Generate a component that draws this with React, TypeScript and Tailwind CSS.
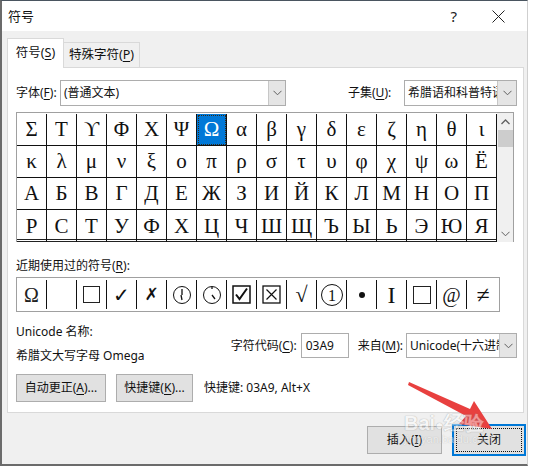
import React from 'react';

const ui = "font-['Noto_Sans','Noto_Sans_CJK_SC',sans-serif]";
const serif = "font-['Liberation_Serif','DejaVu_Serif',serif]";

const U: React.FC<{ c: string }> = ({ c }) => (
  <span className="underline underline-offset-[2px] decoration-1">{c}</span>
);

const Chevron: React.FC = () => (
  <svg width="9" height="6" viewBox="0 0 9 6">
    <path d="M0.5 0.8 L4.5 4.8 L8.5 0.8" fill="none" stroke="#606060" strokeWidth="1" />
  </svg>
);

const grid = [
  'ΣΤϒΦΧΨΩαβγδεζηθι',
  'κλμνξοπρστυφχψωЁ',
  'АБВГДЕЖЗИЙКЛМНОП',
  'РСТУФХЦЧШЩЪЫЬЭЮЯ',
];

const Clock: React.FC<{ hand: string }> = ({ hand }) => (
  <svg width="20" height="20" viewBox="0 0 20 20">
    <circle cx="10" cy="10" r="8.5" fill="none" stroke="#111" strokeWidth="1" />
    <path d={hand} fill="none" stroke="#111" strokeWidth="1.3" />
  </svg>
);

const recent: React.ReactNode[] = [
  <span className={`${serif} text-[20px] font-normal text-[#222]`}>Ω</span>,
  null,
  <span className="block w-[17px] h-[17px] border-[1.5px] border-[#222]" />,
  <span className="font-['DejaVu_Sans'] text-[20px] font-bold">✓</span>,
  <span className="font-['DejaVu_Sans'] text-[17px] font-bold">✗</span>,
  <Clock hand="M10 4 L10 10 M9 10 L10 15" />,
  <Clock hand="M10 2 L10 4 M10 10 L13 14" />,
  <svg width="19" height="19" viewBox="0 0 19 19">
    <rect x="1" y="1" width="17" height="17" fill="none" stroke="#111" strokeWidth="1.5" />
    <path d="M4 9.5 L7.5 14 L15 3.5" fill="none" stroke="#111" strokeWidth="2" />
  </svg>,
  <svg width="19" height="19" viewBox="0 0 19 19">
    <rect x="1" y="1" width="17" height="17" fill="none" stroke="#111" strokeWidth="1.3" />
    <path d="M4.5 4.5 L14.5 14.5 M14.5 4.5 L4.5 14.5" fill="none" stroke="#111" strokeWidth="1.2" />
  </svg>,
  <span className={`${serif} text-[22px]`}>√</span>,
  <svg width="24" height="24" viewBox="0 0 24 24">
    <circle cx="12" cy="12" r="10.5" fill="none" stroke="#111" strokeWidth="1" />
    <text x="12" y="17.5" textAnchor="middle" fontSize="16" fontFamily="Liberation Serif" fill="#111">1</text>
  </svg>,
  <span className="block w-[6px] h-[6px] rounded-full bg-[#111]" />,
  <span className={`${serif} text-[24px]`}>I</span>,
  <span className="block w-[18px] h-[18px] border-[1.5px] border-[#222]" />,
  <span className={`${serif} text-[20px]`}>@</span>,
  <span className={`${serif} text-[24px]`}>≠</span>,
];

export default function App() {
  return (
    <div className={`relative w-[533px] h-[466px] bg-white overflow-hidden text-[12px] text-[#111] ${ui}`}>
      <div className="w-[528px] h-[466px] flex flex-col border-t border-[#4a5560] border-l-2 border-l-[#6b6b6b] border-r border-r-[#cfcfcf] border-b-2 border-b-[#6b6b6b]">
        {/* title bar */}
        <div className="h-[30px] bg-white flex items-center pl-[6px] pr-[22px]">
          <span className="text-[13px] leading-none">符号</span>
          <span className="ml-auto text-[15px] leading-none text-[#222]">?</span>
          <svg className="ml-[35px]" width="13" height="13" viewBox="0 0 13 13">
            <path d="M0.5 0.5 L12.5 12.5 M12.5 0.5 L0.5 12.5" stroke="#222" strokeWidth="1" />
          </svg>
        </div>

        {/* body */}
        <div className="flex-1 bg-[#f0f0f0] pl-[5px] flex flex-col">
          {/* tabs */}
          <div className="flex items-end h-[36px] pt-[7px]">
            <div className="relative z-10 w-[57px] h-[30px] -mb-[1px] bg-white border border-b-0 border-[#d9d9d9] flex items-center justify-center">
              <span className="leading-none text-[12.5px]">符号(<U c="S" />)</span>
            </div>
            <div className="w-[76px] h-[25px] bg-[#f0f0f0] border border-b-0 border-l-0 border-[#d9d9d9] flex items-center justify-center">
              <span className="leading-none text-[12.5px]">特殊字符(<U c="P" />)</span>
            </div>
          </div>

          {/* panel */}
          <div className="w-[517px] bg-white border border-[#d9d9d9] px-[8px] pt-[12px] pb-[10px] flex flex-col">
            {/* font row */}
            <div className="flex items-center h-[26px]">
              <span className="w-[44px] leading-none">字体(<U c="F" />):</span>
              <div className="w-[226px] h-[26px] border border-[#adadad] flex items-stretch">
                <span className="flex-1 pl-[3px] flex items-center leading-none">(普通文本)</span>
                <span className="w-[17px] bg-[#e5e5e5] border-l border-[#c7c7c7] flex items-center justify-center">
                  <Chevron />
                </span>
              </div>
              <span className="ml-auto w-[56px] leading-none">子集(<U c="U" />):</span>
              <div className="w-[113px] -mr-[2px] h-[26px] border border-[#adadad] flex items-stretch">
                <span className="flex-1 pl-[3px] flex items-center leading-none overflow-hidden whitespace-nowrap">希腊语和科普特语</span>
                <span className="w-[19px] bg-[#e5e5e5] border-l border-[#c7c7c7] flex items-center justify-center">
                  <Chevron />
                </span>
              </div>
            </div>

            {/* symbol grid */}
            <div className="mt-[6px] w-[498px] h-[130px] border border-[#a0a0a0] border-b-0 flex">
              <div className="flex flex-col border-b-[3px] border-double border-[#222] pt-[1px]">
                {grid.map((row, r) => (
                  <div key={r} className="flex">
                    {Array.from(row).map((ch, i) => {
                      const sel = r === 0 && i === 6;
                      return (
                        <div
                          key={i}
                          className={`w-[30px] h-[32px] border-r border-b border-[#111] flex items-center justify-center ${serif} text-[21px] leading-none ${
                            r === 3 ? 'border-b-0' : ''
                          } ${sel ? 'bg-[#0078d7] text-white' : ''}`}
                        >
                          {sel ? (
                            <span className="w-[28px] h-[30px] border border-dotted border-[#3a2a10] flex items-center justify-center">
                              {ch}
                            </span>
                          ) : (
                            ch
                          )}
                        </div>
                      );
                    })}
                  </div>
                ))}
              </div>
              {/* scrollbar */}
              <div className="w-[17px] h-[129px] bg-[#f0f0f0] flex flex-col items-center">
                <div className="h-[17px] flex items-center justify-center">
                  <svg width="9" height="6" viewBox="0 0 9 6">
                    <path d="M0.5 5 L4.5 1 L8.5 5" fill="none" stroke="#606060" strokeWidth="1.3" />
                  </svg>
                </div>
                <div className="w-[15px] h-[17px] bg-[#cdcdcd]" />
                <div className="mt-auto h-[17px] flex items-center justify-center">
                  <Chevron />
                </div>
              </div>
            </div>

            {/* recent */}
            <div className="mt-[16px] h-[16px] flex items-center leading-none">
              近期使用过的符号(<U c="R" />):
            </div>
            <div className="mt-[3px] w-[484px] h-[35px] border border-[#a0a0a0] flex items-stretch py-[2px]">
              {recent.map((n, i) => (
                <div
                  key={i}
                  className={`${i === 15 ? 'w-[32px]' : 'w-[30px] border-r border-[#111]'} flex items-center justify-center leading-none`}
                >
                  {n}
                </div>
              ))}
            </div>

            {/* unicode info */}
            <div className="mt-[12px] h-[40px] flex">
              <div className="flex flex-col">
                <span className="h-[16px] leading-[16px]">Unicode 名称:</span>
                <span className="mt-[7px] h-[17px] leading-[17px]">希腊文大写字母 Omega</span>
              </div>
              <div className="ml-auto mt-[9px] flex items-center h-[25px]">
                <span className="leading-none">字符代码(<U c="C" />):</span>
                <div className="ml-[4px] w-[48px] h-[25px] border border-[#adadad] pl-[4px] flex items-center leading-none">03A9</div>
                <span className="ml-[9px] leading-none">来自(<U c="M" />):</span>
                <div className="ml-[3px] -mr-[2px] w-[111px] h-[25px] border border-[#adadad] flex items-stretch">
                  <span className="flex-1 pl-[3px] flex items-center leading-none overflow-hidden whitespace-nowrap">Unicode(十六进制)</span>
                  <span className="w-[17px] bg-[#e5e5e5] border-l border-[#c7c7c7] flex items-center justify-center">
                    <Chevron />
                  </span>
                </div>
              </div>
            </div>

            {/* buttons */}
            <div className="mt-[10px] h-[28px] flex items-center">
              <div className="w-[90px] h-[28px] bg-[#e1e1e1] border border-[#adadad] flex items-center justify-center leading-none">
                自动更正(<U c="A" />)...
              </div>
              <div className="ml-[10px] w-[77px] h-[28px] bg-[#e1e1e1] border border-[#adadad] flex items-center justify-center leading-none">
                快捷键(<U c="K" />)...
              </div>
              <span className="ml-[11px] leading-none">快捷键: 03A9, Alt+X</span>
            </div>
          </div>

          {/* dialog buttons */}
          <div className="mt-[11px] flex items-center justify-end pr-[1px]">
            <div className="w-[75px] h-[28px] bg-[#e1e1e1] border border-[#adadad] flex items-center justify-center leading-none">
              插入(<U c="I" />)
            </div>
            <div className="ml-[10px] w-[74px] h-[32px] bg-[#e1e1e1] border-2 border-[#0078d7] p-[2px] flex">
              <div className="flex-1 border border-dotted border-[#111] flex items-center justify-center leading-none">关闭</div>
            </div>
          </div>
        </div>
      </div>

      {/* annotation arrow */}
      <svg className="absolute left-0 top-0 pointer-events-none" width="533" height="466" viewBox="0 0 533 466">
        <polygon points="409,382 470,409 474,401 492,429 459,424 466,416 408,385" fill="#e8403f" />
      </svg>

      {/* watermark */}
      <div className="absolute left-[404px] top-[413px] pointer-events-none flex flex-col leading-none opacity-45">
        <span className="font-['Liberation_Sans'] text-[20px] font-bold text-white [text-shadow:0_0_1px_#777,0_0_1px_#777]">
          Bai<span className="text-[14px]">●</span>经验
        </span>
        <span className="mt-[1px] font-['Liberation_Sans'] text-[11px] text-white [text-shadow:0_0_1px_#777]">jingyan.baidu.com</span>
      </div>
    </div>
  );
}
